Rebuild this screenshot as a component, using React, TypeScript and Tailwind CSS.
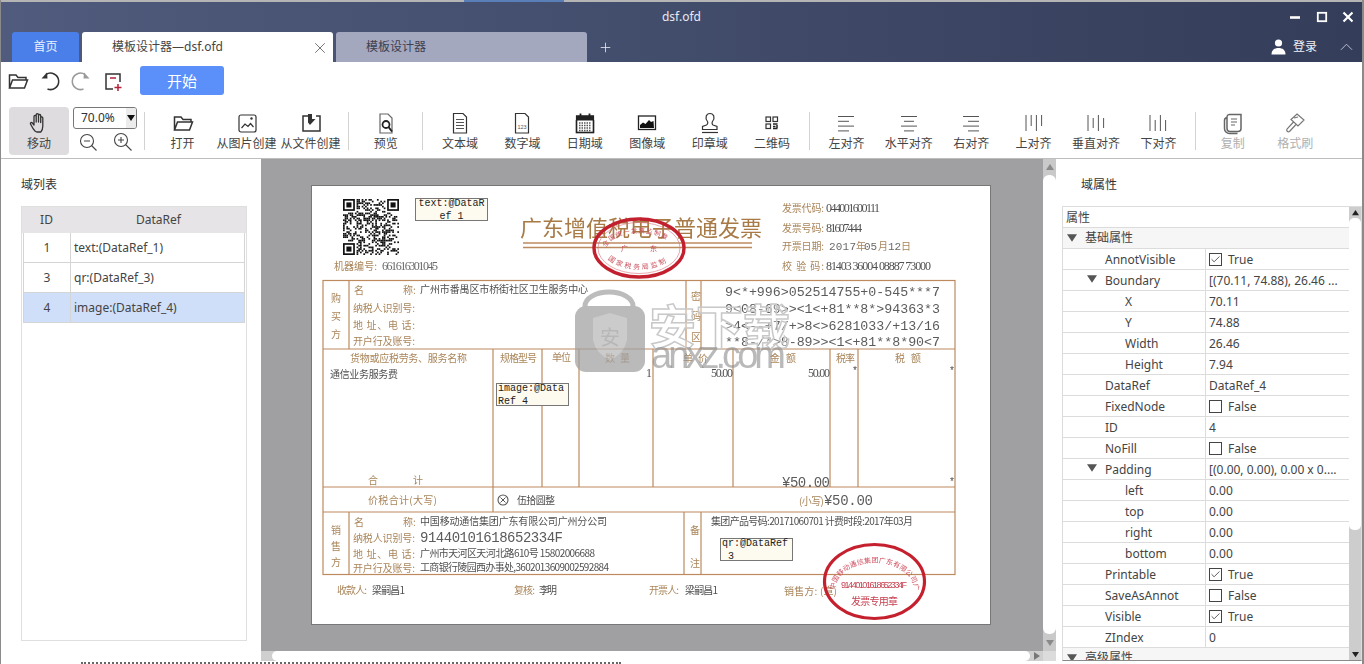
import type { ReactNode } from "react";
import { Check, Plus, X } from "lucide-react";

const TAN = "#a9855a";
const INK = "#4f4f4f";
const LINE = "#bd8a5e";

function Ico({ children, muted = false }: { children: ReactNode; muted?: boolean }) {
  return (
    <svg
      width="24"
      height="24"
      viewBox="0 0 24 24"
      fill="none"
      stroke={muted ? "#9a9a9a" : "#333"}
      strokeWidth="1.2"
      className="shrink-0"
    >
      {children}
    </svg>
  );
}

const FolderIcon = () => (
  <Ico>
    <path strokeWidth="1.5" d="M3.5 19V6h6.5l2 2.5h8V11M3.5 19l3-8h15l-3 8z" />
  </Ico>
);

function Tool({
  label,
  icon,
  width = "w-[62.4px]",
  muted = false,
}: {
  label: string;
  icon: ReactNode;
  width?: string;
  muted?: boolean;
}) {
  return (
    <div className={`${width} h-[52px] shrink-0 flex flex-col items-center pt-[5px]`}>
      <div className="h-6 flex items-center justify-center">{icon}</div>
      <div className={`mt-[2px] text-xs leading-[14px] whitespace-nowrap ${muted ? "text-[#b0b0b0]" : "text-[#444]"}`}>
        {label}
      </div>
    </div>
  );
}

const Sep = () => <div className="w-px h-[38px] mt-[6px] mx-[5.5px] shrink-0 bg-[#d2d2d2]" />;

function Lines({ rows }: { rows: [number, number][] }) {
  return (
    <Ico>
      {rows.map(([a, b], i) => (
        <line key={i} x1={a} x2={b} y1={5.5 + i * 4.8} y2={5.5 + i * 4.8} stroke="#555" strokeWidth="1" />
      ))}
    </Ico>
  );
}

function Bars({ rows }: { rows: [number, number][] }) {
  return (
    <Ico>
      {rows.map(([a, b], i) => (
        <line key={i} y1={a} y2={b} x1={4 + i * 5.2} x2={4 + i * 5.2} stroke="#555" strokeWidth="1" />
      ))}
    </Ico>
  );
}

function Tri({ dir, size = 8 }: { dir: "up" | "down" | "right"; size?: number }) {
  const pts = dir === "up" ? "4,1 8,7 0,7" : dir === "down" ? "0,1 8,1 4,7" : "1,0 7,4 1,8";
  return (
    <svg width={size} height={size} viewBox="0 0 8 8" className="shrink-0">
      <polygon points={pts} fill="currentColor" />
    </svg>
  );
}

function T({
  x,
  y,
  t,
  s = 10,
  c = TAN,
  w,
  f,
}: {
  x: number;
  y: number;
  t: string;
  s?: number;
  c?: string;
  w?: number;
  f?: string;
}) {
  return (
    <text
      x={x}
      y={y}
      fill={c}
      fontSize={s}
      fontFamily={f ?? "'Noto Sans CJK SC', sans-serif"}
      textLength={w}
      lengthAdjust={w ? "spacing" : undefined}
    >
      {t}
    </text>
  );
}

const SERIF = "'Liberation Serif', 'Noto Sans CJK SC', serif";
const MONO = "'Liberation Mono', 'Noto Sans CJK SC', monospace";

function QrCode() {
  const n = 33;
  const cell = 56 / n;
  const cells: ReactNode[] = [];
  const finder = (r: number, c: number) => r >= 0 && c >= 0 && r < 8 && c < 8;
  for (let r = 0; r < n; r++) {
    for (let c = 0; c < n; c++) {
      if (finder(r, c) || finder(r, c - n + 8) || finder(r - n + 8, c)) continue;
      const h = ((r * 73 + c * 151 + r * c * 37) ^ (r * r * 11 + c * c * 7)) % 7;
      if (h < 3) {
        cells.push(<rect key={`${r}-${c}`} x={343 + c * cell} y={199 + r * cell} width={cell} height={cell} fill="#111" />);
      }
    }
  }
  const eyes = [
    [343, 199],
    [343 + 26 * cell, 199],
    [343, 199 + 26 * cell],
  ];
  return (
    <g>
      {cells}
      {eyes.map(([x, y], i) => (
        <g key={i}>
          <rect x={x + cell / 2} y={y + cell / 2} width={cell * 6} height={cell * 6} fill="none" stroke="#111" strokeWidth={cell} />
          <rect x={x + cell * 2} y={y + cell * 2} width={cell * 3} height={cell * 3} fill="#111" />
        </g>
      ))}
    </g>
  );
}

// the scanned invoice is a picture in the app, so it is drawn as one svg
function Invoice() {
  const v = [
    [349, 280, 349, 349],
    [686, 280, 686, 349],
    [701, 280, 701, 349],
    [493, 349, 493, 512],
    [542, 349, 542, 487],
    [579, 349, 579, 487],
    [653, 349, 653, 487],
    [733, 349, 733, 487],
    [830, 349, 830, 487],
    [858, 349, 858, 487],
    [349, 512, 349, 574],
    [684, 512, 684, 574],
    [701, 512, 701, 574],
    [323, 349, 955, 349],
    [323, 487, 955, 487],
    [323, 512, 955, 512],
  ];
  return (
    <svg width="678" height="438" viewBox="312 186 678 438" className="block blur-[0.3px]">
      <QrCode />
      <T x={520} y={236} t="广东增值税电子普通发票" s={22} c="#a87a45" w={242} />
      <line x1={523} x2={752} y1={243} y2={243} stroke={LINE} strokeWidth="1.4" />
      <line x1={523} x2={752} y1={247.5} y2={247.5} stroke={LINE} strokeWidth="1.4" />
      <T x={334} y={270} t="机器编号:" w={43} />
      <T x={382} y={270} t="661616301045" s={12} c="#6a6a6a" f={SERIF} w={56} />
      <T x={782} y={212} t="发票代码:" w={42} />
      <T x={826} y={212} t="044001600111" s={12} c={INK} f={SERIF} w={54} />
      <T x={782} y={232} t="发票号码:" w={42} />
      <T x={826} y={232} t="81607444" s={12} c={INK} f={SERIF} w={36} />
      <T x={782} y={250} t="开票日期:" w={42} />
      <T x={829} y={250} t="2017" s={11} c="#6a6a6a" f={MONO} w={27} />
      <T x={856} y={250} t="年" />
      <T x={864} y={250} t="05" s={11} c="#6a6a6a" f={MONO} w={13} />
      <T x={878} y={250} t="月" />
      <T x={888} y={250} t="12" s={11} c="#6a6a6a" f={MONO} w={13} />
      <T x={901} y={250} t="日" />
      <T x={782} y={270} t="校 验 码:" w={42} />
      <T x={826} y={270} t="81403 36004 08887 73000" s={12} c={INK} f={SERIF} w={105} />

      <rect x={323} y={280.5} width={632} height={294} fill="none" stroke={LINE} strokeWidth="1.2" />
      {v.map(([x1, y1, x2, y2], i) => (
        <line key={i} x1={x1} y1={y1} x2={x2} y2={y2} stroke={LINE} strokeWidth="1.2" />
      ))}

      <T x={331} y={302} t="购" />
      <T x={331} y={320} t="买" />
      <T x={331} y={338} t="方" />
      <T x={354} y={294} t="名" />
      <T x={403} y={294} t="称:" />
      <T x={420} y={293} t="广州市番禺区市桥街社区卫生服务中心" c={INK} w={168} />
      <T x={353} y={312} t="纳税人识别号:" w={62} />
      <T x={353} y={329} t="地 址、电 话:" w={62} />
      <T x={353} y={345} t="开户行及账号:" w={62} />
      <T x={691} y={300} t="密" />
      <T x={691} y={320} t="码" />
      <T x={691} y={341} t="区" />
      <T x={725} y={296} t="9<*+996>052514755+0-545***7" s={13.3} c="#5b5b5b" f={MONO} w={215} />
      <T x={725} y={313} t="9<08-69>><1<+81**8*>94363*3" s={13.3} c="#5b5b5b" f={MONO} w={215} />
      <T x={725} y={330} t=">4<--+7/+>8<>6281033/+13/16" s={13.3} c="#5b5b5b" f={MONO} w={215} />
      <T x={725} y={346} t="**8-/*>8-89>><1<+81**8*90<7" s={13.3} c="#5b5b5b" f={MONO} w={215} />

      <T x={350} y={362} t="货物或应税劳务、服务名称" w={117} />
      <T x={500} y={362} t="规格型号" w={37} />
      <T x={552} y={361} t="单位" w={19} />
      <T x={605} y={362} t="数 量" w={25} />
      <T x={683} y={362} t="单 价" w={25} />
      <T x={770} y={362} t="金 额" w={26} />
      <T x={836} y={362} t="税率" w={19} />
      <T x={895} y={362} t="税 额" w={26} />
      <T x={330} y={378} t="通信业务服务费" c={INK} w={68} />
      <T x={646} y={377} t="1" s={12} c={INK} f={SERIF} />
      <T x={711} y={377} t="50.00" s={12} c={INK} f={SERIF} w={22} />
      <T x={808} y={377} t="50.00" s={12} c={INK} f={SERIF} w={22} />
      <T x={852} y={374} t="*" s={10} c={INK} f={MONO} />
      <T x={949} y={374} t="*" s={10} c={INK} f={MONO} />
      <T x={368} y={484} t="合" />
      <T x={413} y={484} t="计" />
      <T x={782} y={487} t="¥50.00" s={14} c="#5b5b5b" f={MONO} w={48} />
      <T x={949} y={485} t="*" s={10} c={INK} f={MONO} />

      <T x={368} y={504} t="价税合计(大写)" w={69} />
      <circle cx={503} cy={500} r={5} fill="none" stroke="#555" strokeWidth="1.1" />
      <path d="M500.5 497.5l5 5M505.5 497.5l-5 5" stroke="#555" strokeWidth="1" />
      <T x={517} y={504} t="伍拾圆整" c={INK} w={38} />
      <T x={799} y={505} t="(小写)" w={25} />
      <T x={824} y={505} t="¥50.00" s={14} c="#5b5b5b" f={MONO} w={49} />

      <T x={331} y={534} t="销" />
      <T x={331} y={550} t="售" />
      <T x={331} y={566} t="方" />
      <T x={354} y={526} t="名" />
      <T x={403} y={526} t="称:" />
      <T x={420} y={525} t="中国移动通信集团广东有限公司广州分公司" c={INK} w={187} />
      <T x={353} y={542} t="纳税人识别号:" w={62} />
      <T x={420} y={542} t="91440101618652334F" s={14} c="#5b5b5b" f={MONO} w={143} />
      <T x={353} y={558} t="地 址、电 话:" w={62} />
      <T x={420} y={557} t="广州市天河区天河北路610号 15802006688" c={INK} w={175} />
      <T x={353} y={572} t="开户行及账号:" w={62} />
      <T x={420} y={571} t="工商银行陵园西办事处,3602013609002592884" c={INK} w={189} />
      <T x={690} y={534} t="备" />
      <T x={690} y={567} t="注" />
      <T x={711} y={525} t="集团产品号码:20171060701 计费时段:2017年03月" c={INK} w={202} />

      <T x={337} y={594} t="收款人:" w={30} />
      <T x={372} y={594} t="梁嗣昌1" c={INK} w={33} />
      <T x={514} y={594} t="复核:" w={21} />
      <T x={539} y={594} t="李明" c={INK} w={18} />
      <T x={649} y={594} t="开票人:" w={30} />
      <T x={685} y={594} t="梁嗣昌1" c={INK} w={33} />
      <T x={784} y={595} t="销售方: (章)" w={53} />

      <ellipse cx={639} cy={248} rx={45} ry={29} fill="none" stroke="#c2202e" strokeWidth="3.4" />
      <ellipse cx={639} cy={248} rx={41} ry={25.5} fill="none" stroke="#d9707a" strokeWidth="0.6" />
      <path id="seal-top" d="M606 250A33 17 0 0 1 672 250" fill="none" />
      <path id="seal-bottom" d="M604 254A36 20 0 0 0 674 254" fill="none" />
      <text fontSize="6.5" fill="#c8505c" fontFamily="'Noto Sans CJK SC', sans-serif">
        <textPath href="#seal-top" startOffset="3%" textLength="66">全国统一发票监制章</textPath>
      </text>
      <text fontSize="7" fill="#c8505c" fontFamily="'Noto Sans CJK SC', sans-serif">
        <textPath href="#seal-bottom" startOffset="8%" textLength="62">国家税务局监制</textPath>
      </text>
      <T x={621} y={251} t="广" s={7} c="#c8505c" />
      <T x={650} y={251} t="东" s={7} c="#c8505c" />

      <ellipse cx={874.5} cy={581.5} rx={50} ry={37} fill="none" stroke="#c5202e" strokeWidth="3.2" />
      <path id="stamp-top" d="M835 590A39 27 0 1 1 914 590" fill="none" />
      <text fontSize="7" fill="#d0505f" fontFamily="'Noto Sans CJK SC', sans-serif">
        <textPath href="#stamp-top" textLength="135">中国移动通信集团广东有限公司广州分公司</textPath>
      </text>
      <T x={841} y={588} t="91440101618652334F" s={9} c="#c8404f" f="'Liberation Sans', sans-serif" w={66} />
      <T x={851} y={605} t="发票专用章" s={10} c="#c8404f" w={47} />

      <g opacity="0.72">
        <path d="M585 310v-4a24 14 0 0 1 48 0v4" fill="none" stroke="#a2a2a2" strokeWidth="5" />
        <rect x={575} y={306} width={70} height={66} rx={11} fill="#a0a0a0" />
        <path d="M593 318l17-5 17 5v22q-3 14-17 20q-14-6-17-20z" fill="#b7b7b7" />
        <T x={600} y={345} t="安" s={20} c="#9c9c9c" />
      </g>
      <text
        x={649}
        y={344}
        fontSize="47"
        fontWeight="700"
        fill="#ffffff"
        fillOpacity="0.3"
        stroke="#c8c8c8"
        strokeWidth="1.5"
        fontFamily="'Noto Sans CJK SC', sans-serif"
      >
        安下载
      </text>
      <text x={651} y={368} fontSize="38" fill="#8e8e8e" fillOpacity="0.62" fontFamily="'Liberation Sans', sans-serif" textLength={135}>
        anxz.com
      </text>
    </svg>
  );
}

function Note({ lines, pos }: { lines: ReactNode; pos: string }) {
  return (
    <div
      className={`absolute ${pos} w-[73px] h-[23px] border border-[#777] bg-[#fdfaef] font-['Liberation_Mono',monospace] text-[10px] leading-[13px] text-[#222]`}
    >
      {lines}
    </div>
  );
}

function Prop({
  name,
  value,
  indent = "pl-[42px]",
  open = false,
  check,
}: {
  name: string;
  value: string;
  indent?: string;
  open?: boolean;
  check?: boolean;
}) {
  return (
    <div className="h-[21px] shrink-0 flex border-b border-[#dcdcdc] leading-[22px]">
      <div className={`w-[143px] shrink-0 relative border-r border-[#dcdcdc] ${indent}`}>
        {open && (
          <span className="absolute left-[24px] top-[4px] text-[#555]">
            <Tri dir="down" size={10} />
          </span>
        )}
        {name}
      </div>
      <div className="flex-1 flex items-center pl-[3px] pt-[2px] whitespace-nowrap overflow-hidden">
        {check !== undefined && (
          <span className="w-[13px] h-[13px] mr-[6px] -mt-[2px] shrink-0 border border-[#444] bg-white flex items-center justify-center">
            {check && <Check size={11} strokeWidth={1.6} className="text-[#222]" />}
          </span>
        )}
        {value}
      </div>
    </div>
  );
}

function Group({ label }: { label: string }) {
  return (
    <div className="h-[21px] shrink-0 flex items-center border-b border-[#dcdcdc] bg-[#f6f6f6] leading-[22px]">
      <span className="ml-[4px] mr-[8px] text-[#555]">
        <Tri dir="down" size={10} />
      </span>
      {label}
    </div>
  );
}

export default function App() {
  const sub = "pl-[62px]";
  return (
    <div className="relative w-[1364px] h-[664px] overflow-hidden flex flex-col bg-white border-l border-r-2 border-[#8a8a8a] font-['Noto_Sans','Noto_Sans_CJK_SC',sans-serif] text-xs text-[#444]">
      <div className="h-[2px] shrink-0 bg-[#b5b5b5]">
        <div className="ml-[463px] w-[100px] h-[2px] bg-[#5a7fb8]" />
      </div>

      <div className="h-[60px] shrink-0 bg-linear-to-r from-[#505b7d] to-[#343d59] text-white">
        <div className="h-[30px] grid grid-cols-[1fr_auto_1fr] items-center">
          <div />
          <div className="text-[#e8eaf2]">dsf.ofd</div>
          <div className="flex justify-end items-center pr-[9px]">
            <svg width="63" height="12" viewBox="0 0 63 12" fill="none" stroke="#fff">
              <path d="M0 6.500h10" strokeWidth="2.600" />
              <rect x="27.800" y="1.800" width="8.400" height="8.400" strokeWidth="1.800" />
              <path d="M53.500 1.500l9 9M62.500 1.500l-9 9" strokeWidth="2.200" />
            </svg>
          </div>
        </div>
        <div className="h-[30px] flex items-end pl-[11px]">
          <div className="w-[67px] h-[30px] rounded-t-[3px] bg-[#4a7fe9] text-[#eaf1ff] flex items-center justify-center">首页</div>
          <div className="relative ml-[3px] w-[251px] h-[30px] rounded-t-[3px] bg-white text-[#444] flex items-center pl-[30px]">
            模板设计器—dsf.ofd
            <X size={18} strokeWidth={0.9} className="absolute right-[4px] top-[7px] text-[#333]" />
          </div>
          <div className="ml-[3px] w-[251px] h-[30px] rounded-t-[3px] bg-[#a4a8bf] text-[#3d4050] flex items-center pl-[30px]">模板设计器</div>
          <Plus size={15} strokeWidth={1.3} className="ml-[11px] mb-[7px] text-[#e8eaf2]" />
          <div className="ml-auto h-[30px] flex items-center pr-[9px]">
            <svg width="15" height="16" viewBox="0 0 15 16" fill="#fff">
              <circle cx="7.500" cy="4" r="3.600" />
              <path d="M0.500 15.500c0-4.500 3-6.500 7-6.500s7 2 7 6.500z" />
            </svg>
            <span className="ml-[7px] text-[#eef0f6]">登录</span>
            <svg width="13" height="8" viewBox="0 0 14 8" fill="none" stroke="#c5c9d6" className="ml-[23px]">
              <path d="M1 7l6-6 6 6" />
            </svg>
          </div>
        </div>
      </div>

      <div className="h-[44px] shrink-0 flex items-start pl-[5px]">
        <div className="mt-[7px] flex">
          <div className="w-[24px]">
            <FolderIcon />
          </div>
          <div className="ml-[8px]">
            <Ico>
              <path strokeWidth="1.5" d="M8 5.500A8.200 8.200 0 1 1 9.500 20" />
              <path d="M3.500 9.500L9 3.500l.5 6z" fill="#333" stroke="none" />
            </Ico>
          </div>
          <div className="ml-[7px]">
            <Ico muted>
              <path strokeWidth="1.5" d="M16 5.500A8.200 8.200 0 1 0 14.500 20" />
              <path d="M20.500 9.500L15 3.500l-.5 6z" fill="#9a9a9a" stroke="none" />
            </Ico>
          </div>
          <div className="ml-[8px]">
            <Ico>
              <path strokeWidth="1.5" d="M12 20H5V5h14v8" />
              <path stroke="#b3203a" strokeWidth="1.5" d="M9 9h6M17 15v7M13.500 18.500h7" />
            </Ico>
          </div>
        </div>
        <div className="ml-[15px] mt-[4px] w-[84px] h-[29px] rounded-[3px] bg-[#5b8ffa] text-white text-[15px] flex items-center justify-center">开始</div>
      </div>

      <div className="h-[53px] shrink-0 flex items-start border-b border-[#bdbdbd]">
        <div className="ml-[8px] mt-px w-[60px] h-[48px] rounded-[4px] bg-[#dedcde] flex flex-col items-center pt-[4px]">
          <svg width="24" height="24" viewBox="0 0 24 24" fill="none" stroke="#333" strokeWidth="1.3" strokeLinejoin="round">
            <path d="M8 20c-1.500-1.500-3.500-5-4.500-7-.6-1.200 1-2 1.900-1l1.600 2V5.500c0-1.500 2.200-1.500 2.200 0V11V3.800c0-1.500 2.300-1.500 2.300 0V11V4.600c0-1.500 2.200-1.500 2.200 0V11.500V7c0-1.400 2.100-1.400 2.100 0v8c0 3-1 5-2 6H10c-.7 0-1.300-.4-2-1z" />
          </svg>
          <div className="mt-[2px] text-xs leading-[14px] text-[#444]">移动</div>
        </div>

        <div className="ml-[4px] mr-[1.5px] mt-px w-[64px] shrink-0">
          <div className="h-[22px] rounded-[3px] border border-[#777] flex overflow-hidden">
            <span className="flex-1 pl-[7px] leading-[20px] text-[#333]">70.0%</span>
            <span className="w-[10px] bg-[#ececec] flex items-center justify-center text-[#111]">
              <Tri dir="down" />
            </span>
          </div>
          <div className="mt-[3px] flex text-[#444]">
            <div className="ml-[3px]">
              <svg width="24" height="20" viewBox="0 0 24 20" fill="none" stroke="#444" strokeWidth="1.100">
                <circle cx="11" cy="9" r="6.500" />
                <path d="M8 9h6M15.500 13.500l5 5" />
              </svg>
            </div>
            <div className="ml-[10px]">
              <svg width="24" height="20" viewBox="0 0 24 20" fill="none" stroke="#444" strokeWidth="1.100">
                <circle cx="11" cy="8" r="6.500" />
                <path d="M8 8h6M11 5v6M15.500 12.500l6 6" />
              </svg>
            </div>
          </div>
        </div>
        <Sep />

        <div className="flex">
          <Tool width="w-16" label="打开" icon={<FolderIcon />} />
          <Tool
            width="w-16"
            label="从图片创建"
            icon={
              <Ico>
                <rect x="4" y="4" width="17" height="17" rx="2" />
                <path d="M6.500 17l3.500-4 3 2.500 2.500-3 3 3.500" />
                <circle cx="16.500" cy="7.500" r="1.200" fill="#333" stroke="none" />
              </Ico>
            }
          />
          <Tool
            width="w-16"
            label="从文件创建"
            icon={
              <Ico>
                <path d="M9 5H4v15h17V5h-4" strokeWidth="1.500" />
                <path d="M9 3h4v5h3.500l-5.500 6-2-2.500z" fill="#333" stroke="none" />
              </Ico>
            }
          />
        </div>
        <Sep />
        <Tool
          label="预览"
          icon={
            <Ico>
              <path d="M6 3h8l4 4v15H6z" stroke="#666" />
              <circle cx="12" cy="13.500" r="3.500" stroke="#222" strokeWidth="1.800" />
              <path d="M14.500 16l3.500 4.500" stroke="#222" strokeWidth="2" />
            </Ico>
          }
        />
        <Sep />
        <Tool
          label="文本域"
          icon={
            <Ico>
              <path d="M5.500 2.500h9.500l3.500 3.500v16h-13z" />
              <path d="M8 8.500h8M8 11.500h8M8 14.500h8M8 17.500h8" stroke="#555" />
            </Ico>
          }
        />
        <Tool
          label="数字域"
          icon={
            <Ico>
              <path d="M5.500 2.500h9.500l3.500 3.500v16h-13z" />
              <text x="12" y="17.500" textAnchor="middle" fontSize="5.500" stroke="none" fill="#555" fontFamily="'Liberation Sans', sans-serif">
                123
              </text>
            </Ico>
          }
        />
        <Tool
          label="日期域"
          icon={
            <Ico>
              <rect x="3.500" y="5" width="17" height="16.500" fill="#fff" />
              <rect x="3" y="4.500" width="18" height="5" fill="#222" stroke="none" />
              <path d="M7.500 2.500v4M16.500 2.500v4" stroke="#222" strokeWidth="1.800" />
              <path d="M6 12h12M6 14.500h12M6 17h12M6 19.500h12" stroke="#555" strokeWidth="1.400" strokeDasharray="1.500 1" />
              <path d="M3.500 9v12.500h17V9" stroke="#222" strokeWidth="1.500" />
            </Ico>
          }
        />
        <Tool
          label="图像域"
          icon={
            <Ico>
              <rect x="3.500" y="5" width="17" height="13.500" strokeWidth="1.300" stroke="#222" />
              <path d="M5 17v-3l3-2.500 2.500 1.500 3.500-4 2 2 2.500-1 .5 7z" fill="#111" stroke="none" />
            </Ico>
          }
        />
        <Tool
          label="印章域"
          icon={
            <Ico>
              <path d="M9.500 10.500c-3-4-1.200-8 2.500-8s5.500 4 2.500 8c-.7 1-.5 3 .5 3.500l4 1.500v3H4.500v-3l4-1.500c1-.5 1.700-2.500 1-3.500z" />
              <path d="M4 21.500h16" />
            </Ico>
          }
        />
        <Tool
          label="二维码"
          icon={
            <Ico>
              <rect x="6" y="6" width="4.500" height="4.500" />
              <rect x="13" y="6" width="4.500" height="4.500" />
              <rect x="6" y="13" width="4.500" height="4.500" />
              <path d="M13 13h4.500M13 15.500h2.500M13 17.500h4.500M17 14v3" stroke="#222" strokeWidth="1.500" />
            </Ico>
          }
        />
        <Sep />
        <Tool label="左对齐" icon={<Lines rows={[[4, 20], [4, 15], [4, 20], [4, 15]]} />} />
        <Tool label="水平对齐" icon={<Lines rows={[[4, 20], [7, 17], [4, 20], [7, 17]]} />} />
        <Tool label="右对齐" icon={<Lines rows={[[4, 20], [9, 20], [4, 20], [9, 20]]} />} />
        <Tool label="上对齐" icon={<Bars rows={[[4, 20], [4, 15], [4, 20], [4, 15]]} />} />
        <Tool label="垂直对齐" icon={<Bars rows={[[4, 20], [7, 17], [4, 20], [7, 17]]} />} />
        <Tool label="下对齐" icon={<Bars rows={[[4, 20], [9, 20], [4, 20], [9, 20]]} />} />
        <Sep />
        <Tool
          muted
          label="复制"
          icon={
            <Ico muted>
              <path strokeWidth="1.500" stroke="#666" d="M9 3.500h11v14a3 3 0 0 1-3 3H9a3 3 0 0 1-3-3V6a2.500 2.500 0 0 1 3-2.500zM6 6.500a3 3 0 0 0-2.500 3v8a5 5 0 0 0 5 5h8" />
              <path stroke="#666" d="M10 8h6M10 11h6M10 14h4" />
            </Ico>
          }
        />
        <Tool
          muted
          label="格式刷"
          icon={
            <Ico muted>
              <path stroke="#777" d="M14 3l7 6-6 6-7-6.500zM10.500 11l-6.500 7a1.800 1.800 0 0 0 2.500 2.500L13 13.500M11 7l4-1" />
            </Ico>
          }
        />
      </div>

      <div className="h-[502px] shrink-0 flex">
        <div className="w-[260px] shrink-0 flex flex-col">
          <div className="h-[47px] pl-[20px] pt-[17px] leading-[18px] text-[#333]">域列表</div>
          <div className="ml-[20px] w-[226px] h-[435px] border border-[#dfdfdf] text-[#444]">
            <div className="h-[26px] flex bg-[#e6e4e6] leading-[26px] text-center">
              <div className="w-[49px]">ID</div>
              <div className="flex-1">DataRef</div>
            </div>
            {[
              ["1", "text:(DataRef_1)"],
              ["3", "qr:(DataRef_3)"],
              ["4", "image:(DataRef_4)"],
            ].map(([id, ref]) => (
              <div
                key={id}
                className={`mx-px h-[30px] flex leading-[29px] border-b border-x border-[#d5d5d5] ${id === "4" ? "bg-[#cfdffa]" : "bg-white"}`}
              >
                <div className="w-[47px] text-center border-r border-[#d5d5d5]">{id}</div>
                <div className="pl-[3px]">{ref}</div>
              </div>
            ))}
          </div>
        </div>

        <div className="w-[795px] shrink-0 flex flex-col">
          <div className="h-[492px] flex">
            <div className="relative w-[782px] bg-[#a09fa2] pl-[50px] pt-[26px]">
              <div className="relative w-[680px] h-[440px] border border-[#777] bg-white">
                <Invoice />
                <Note
                  pos="left-[103px] top-[12px]"
                  lines={
                    <div className="text-center -mt-[2px]">
                      text:@DataR
                      <br />
                      ef 1
                    </div>
                  }
                />
                <Note
                  pos="left-[184px] top-[197px]"
                  lines={
                    <div className="pl-px -mt-[2px]">
                      image:@Data
                      <br />
                      Ref 4
                    </div>
                  }
                />
                <Note
                  pos="left-[408px] top-[352px]"
                  lines={
                    <div className="pl-px -mt-[2px]">
                      qr:@DataRef
                      <br />
                      &nbsp;3
                    </div>
                  }
                />
              </div>
            </div>
            <div className="w-[13px] bg-[#c9c9c9] flex flex-col items-center text-[#8a8a8a]">
              <div className="h-[16px] flex items-center">
                <Tri dir="up" />
              </div>
              <div className="flex-1 w-full rounded-[6px] bg-white" />
              <div className="h-[17px] flex items-center">
                <Tri dir="down" />
              </div>
            </div>
          </div>
          <div className="h-[10px] flex bg-[#cfcfcf] text-[#777]">
            <div className="w-[11px]" />
            <div className="w-[758px] rounded-[5px] bg-white" />
            <div className="w-[13px] flex items-center justify-center">
              <Tri dir="right" />
            </div>
            <div className="flex-1 bg-[#dcdcdc]" />
          </div>
        </div>

        <div className="flex-1 min-w-0 flex flex-col">
          <div className="h-[47px] pl-[25px] pt-[17px] leading-[18px] text-[#333]">域属性</div>
          <div className="ml-[6px] h-[455px] flex border border-[#dcdcdc] border-b-[#8a8a8a] overflow-hidden">
            <div className="w-[287px] flex flex-col">
              <div className="h-[21px] shrink-0 pl-[3px] leading-[22px] border-b border-[#dcdcdc]">属性</div>
              <Group label="基础属性" />
              <Prop name="AnnotVisible" value="True" check />
              <Prop name="Boundary" value="[(70.11, 74.88), 26.46 ..." open />
              <Prop name="X" value="70.11" indent={sub} />
              <Prop name="Y" value="74.88" indent={sub} />
              <Prop name="Width" value="26.46" indent={sub} />
              <Prop name="Height" value="7.94" indent={sub} />
              <Prop name="DataRef" value="DataRef_4" />
              <Prop name="FixedNode" value="False" check={false} />
              <Prop name="ID" value="4" />
              <Prop name="NoFill" value="False" check={false} />
              <Prop name="Padding" value="[(0.00, 0.00), 0.00 x 0...." open />
              <Prop name="left" value="0.00" indent={sub} />
              <Prop name="top" value="0.00" indent={sub} />
              <Prop name="right" value="0.00" indent={sub} />
              <Prop name="bottom" value="0.00" indent={sub} />
              <Prop name="Printable" value="True" check />
              <Prop name="SaveAsAnnot" value="False" check={false} />
              <Prop name="Visible" value="True" check />
              <Prop name="ZIndex" value="0" />
              <Group label="高级属性" />
            </div>
            <div className="w-[12px] bg-[#cdcdcd] flex flex-col items-center text-[#222]">
              <div className="h-[11px] flex items-center">
                <Tri dir="up" size={7} />
              </div>
              <div className="h-[312px] w-full rounded-[5px] bg-white" />
              <div className="mt-auto h-[11px] flex items-center">
                <Tri dir="down" size={7} />
              </div>
            </div>
          </div>
        </div>
      </div>

      <div className="h-[3px] shrink-0 pl-[80px] pt-[1px]">
        <div className="w-[540px] h-[2px] border-t-2 border-dotted border-[#666]" />
      </div>
    </div>
  );
}
